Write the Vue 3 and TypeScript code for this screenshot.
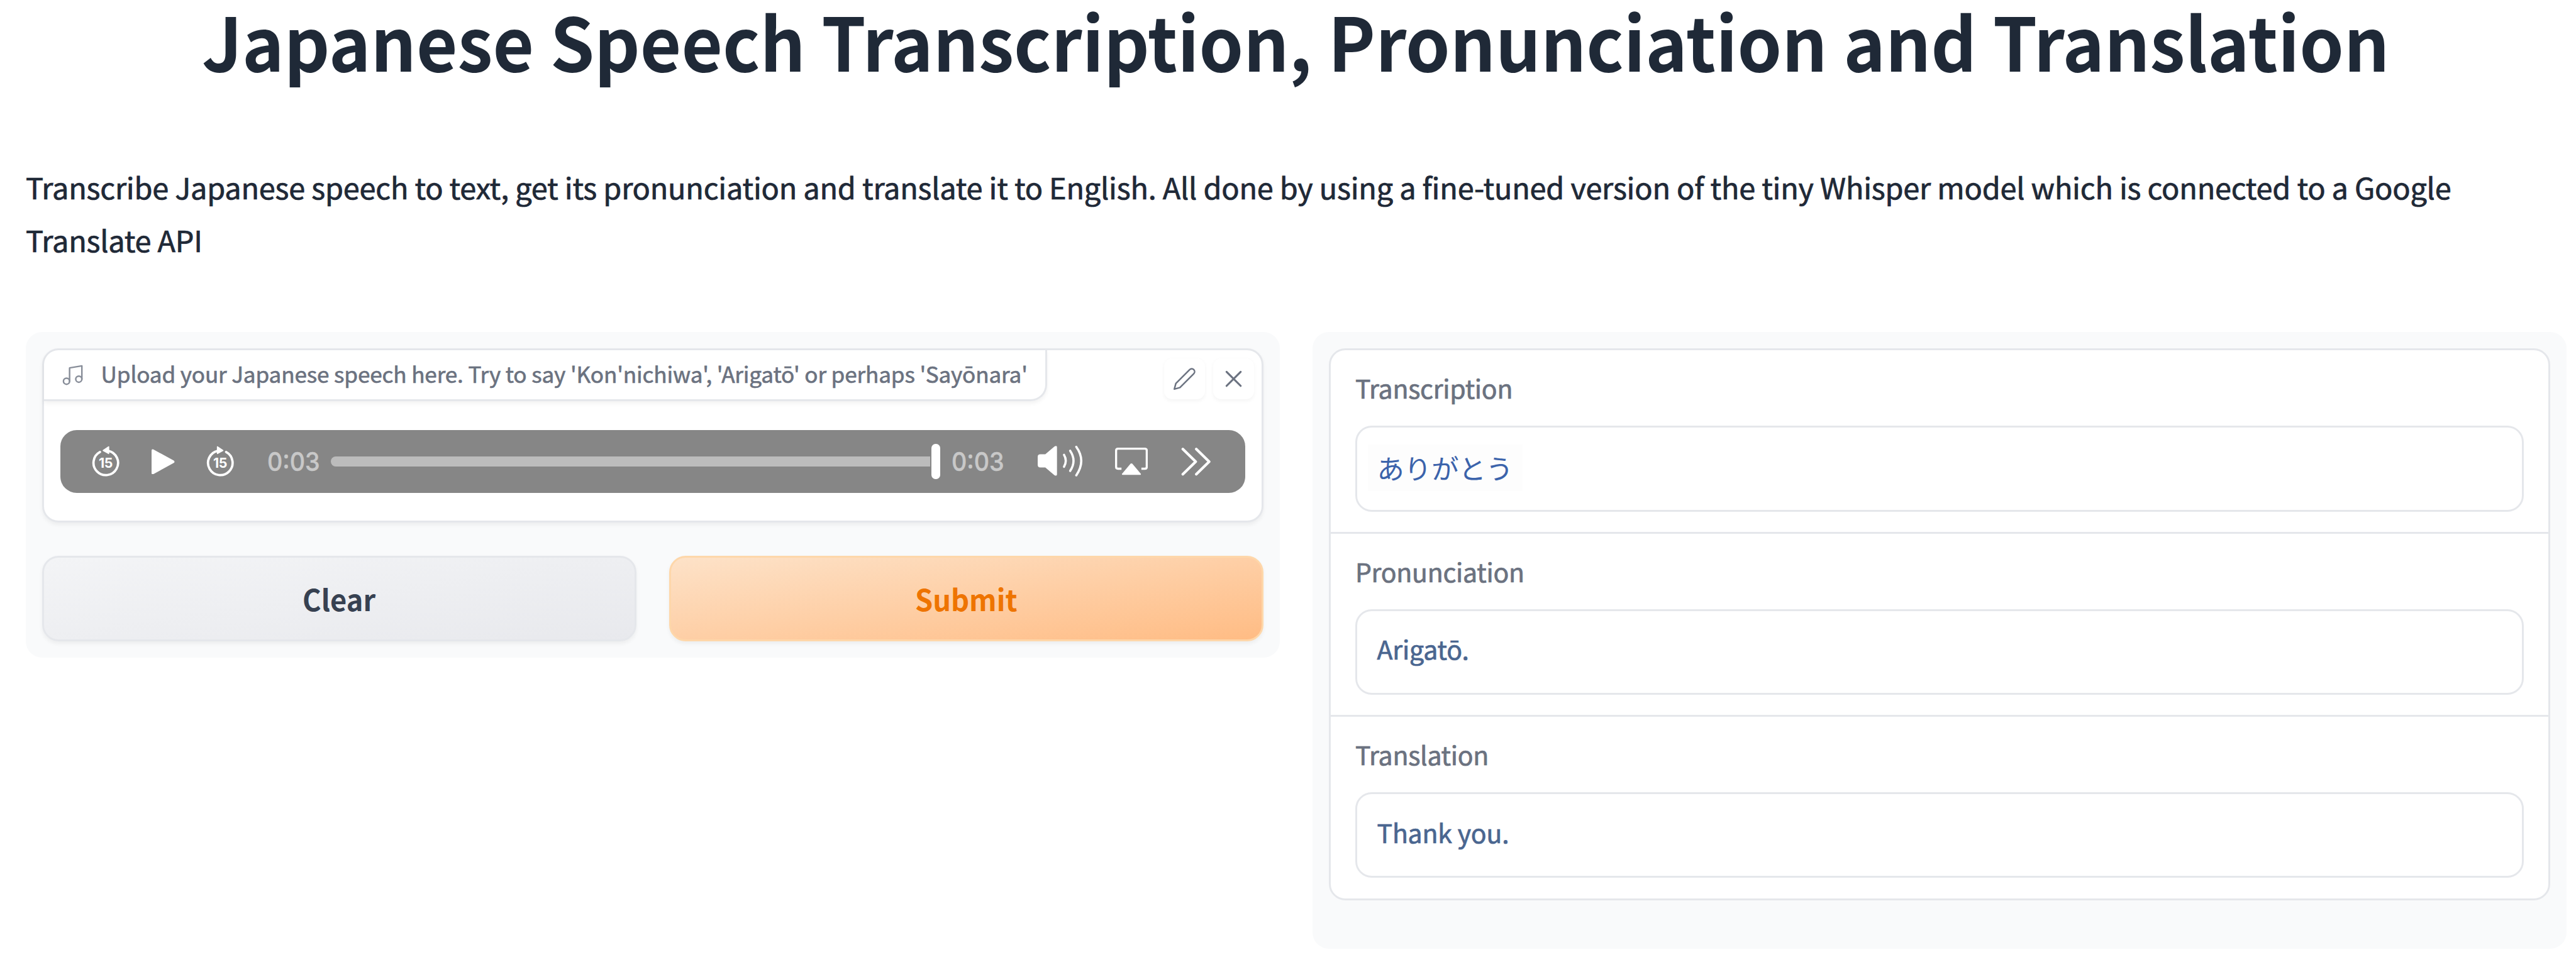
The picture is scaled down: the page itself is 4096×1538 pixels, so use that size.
<script setup lang="ts">
interface Field {
  label: string
  value: string
  translated: boolean
}

const title = 'Japanese Speech Transcription, Pronunciation and Translation'
const description =
  'Transcribe Japanese speech to text, get its pronunciation and translate it to English. All done by using a fine-tuned version of the tiny Whisper model which is connected to a Google Translate API'
const audioLabel =
  "Upload your Japanese speech here. Try to say 'Kon'nichiwa', 'Arigatō' or perhaps 'Sayōnara'"

const fields: Field[] = [
  { label: 'Transcription', value: 'ありがとう', translated: true },
  { label: 'Pronunciation', value: 'Arigatō.', translated: false },
  { label: 'Translation', value: 'Thank you.', translated: false },
]
</script>

<template>
  <main class="page">
    <h1 class="title"><span>{{ title }}</span></h1>
    <p class="description">{{ description }}</p>

    <div class="columns">
      <section class="panel">
        <div class="audio">
          <div class="audio-head">
            <div class="audio-label">
              <svg class="music" viewBox="0 0 24 24" fill="none" stroke="currentColor" stroke-width="1.5" stroke-linecap="round" stroke-linejoin="round">
                <path d="M9 18V5l12-2v13" />
                <circle cx="6" cy="18" r="3" />
                <circle cx="18" cy="16" r="3" />
              </svg>
              <span>{{ audioLabel }}</span>
            </div>
            <div class="tools">
              <button class="tool" aria-label="Edit">
                <svg viewBox="0 0 24 24" fill="none" stroke="currentColor" stroke-width="1.5" stroke-linecap="round" stroke-linejoin="round">
                  <path d="M17 3a2.828 2.828 0 1 1 4 4L7.5 20.5 2 22l1.5-5.5L17 3z" />
                </svg>
              </button>
              <button class="tool" aria-label="Clear">
                <svg viewBox="0 0 24 24" fill="none" stroke="currentColor" stroke-width="1.9" stroke-linecap="round">
                  <path d="M18.9 5.1L5.1 18.9M5.1 5.1l13.8 13.8" />
                </svg>
              </button>
            </div>
          </div>

          <div class="player">
            <svg class="skip" viewBox="0 0 50 54">
              <path d="M15 10.7A21 21 0 1 0 29.5 8.7" fill="none" stroke="#fff" stroke-width="4" stroke-linecap="round" />
              <path d="M20 7.3 29.2 1q1.6-.8 1.6.8v11.5q0 1.4-1.5.6L20 8.9q-1-.8 0-1.6z" fill="#fff" />
              <text x="24.6" y="38" text-anchor="middle">15</text>
            </svg>
            <svg class="play" viewBox="0 0 40 44">
              <path d="M3 .8 38 20q2.5 2 0 4L3 43.2q-3 .8-3-2.2V3q0-3 3-2.2z" fill="#fff" />
            </svg>
            <svg class="skip" viewBox="0 0 50 54">
              <path d="M35 10.7A21 21 0 1 1 20.5 8.7" fill="none" stroke="#fff" stroke-width="4" stroke-linecap="round" />
              <path d="M30 7.3 20.8 1q-1.6-.8-1.6.8v11.5q0 1.4 1.5.6L30 8.9q1-.8 0-1.6z" fill="#fff" />
              <text x="24.6" y="38" text-anchor="middle">15</text>
            </svg>
            <span class="time elapsed">0:03</span>
            <div class="track"></div>
            <div class="knob"></div>
            <span class="time total">0:03</span>
            <svg class="volume" viewBox="0 0 78 54">
              <path d="M4.5 14.5H13L28.5 1.3Q33-1.2 33 2.5V49q0 3.7-4.5 1.2L13 37H4.5Q0 37 0 32.5V19Q0 14.5 4.5 14.5z" fill="#fff" />
              <g fill="none" stroke="#fff" stroke-width="3.8" stroke-linecap="round">
                <path d="M45 15.5Q51 25.5 45 36" />
                <path d="M55.5 8.5Q67 25.5 55.5 43" />
                <path d="M66 1.8Q83 25.5 66 50.5" />
              </g>
            </svg>
            <svg class="airplay" viewBox="0 0 56 48">
              <path d="M11 36H5q-3.2 0-3.2-3.2V5Q1.8 1.8 5 1.8H51q3.2 0 3.2 3.2V32.800Q54.2 36 51 36H45" fill="none" stroke="#fff" stroke-width="3.6" />
              <path d="M26.5 27.5q1.5-1.5 3 0L44 44.5q.8 2-1 2H13q-1.8 0-1-2z" fill="#fff" />
            </svg>
            <svg class="more" viewBox="0 0 52 50">
              <path d="M3 3.5 25 25 3 46.5M26 3.5 48 25 26 46.5" fill="none" stroke="#fff" stroke-width="4.5" stroke-linecap="round" stroke-linejoin="round" />
            </svg>
          </div>
        </div>

        <div class="actions">
          <button class="btn secondary"><span>Clear</span></button>
          <button class="btn primary"><span>Submit</span></button>
        </div>
      </section>

      <section class="panel results">
        <div class="fields">
          <label v-for="f in fields" :key="f.label" class="field">
            <span class="field-label">{{ f.label }}</span>
            <span class="field-box">
              <span :class="f.translated ? 'kana' : 'latin'">{{ f.value }}</span>
            </span>
          </label>
        </div>
      </section>
    </div>
  </main>
</template>

<style>
html {
  font-size: 9.3006px;
}
body {
  margin: 0;
  background: #fff;
}
</style>

<style scoped>
* {
  box-sizing: border-box;
}
.page {
  width: 440.4rem;
  height: 165.3rem;
  padding: 0 1.65rem 0 4.4rem;
  overflow: hidden;
  color: #1f2937;
  background: #fff;
  font-family: 'Noto Sans CJK JP', 'Noto Sans', sans-serif;
}
.title {
  margin: 0;
  height: 27.46rem;
  padding-right: 0.2rem;
  font-size: 12.6rem;
  line-height: 13.6rem;
  font-weight: 700;
  text-align: center;
  white-space: nowrap;
}
.title span {
  display: inline-block;
  transform: scaleX(0.9635);
}
.description {
  margin: 0;
  height: 29.34rem;
  font-size: 5.04rem;
  line-height: 9.03rem;
  letter-spacing: -0.0245rem;
  -webkit-text-stroke: 0.08rem currentColor;
}
.columns {
  display: flex;
  align-items: flex-start;
  gap: 5.6rem;
}
.panel {
  flex: 1 1 0;
  min-width: 0;
  padding: 2.8rem;
  border-radius: 2.8rem;
  background: #f9fafb;
}
.audio {
  height: 29.7rem;
  border: 0.35rem solid #e5e7eb;
  border-radius: 2.8rem;
  background: #fff;
  box-shadow: 0 0.35rem 0.7rem rgba(0, 0, 0, 0.05);
}
.audio-head {
  display: flex;
  justify-content: space-between;
  height: 13.6rem;
}
.audio-label {
  display: flex;
  align-items: center;
  height: 8.7rem;
  padding: 0 3rem 0 2.75rem;
  border-right: 0.35rem solid #e5e7eb;
  border-bottom: 0.35rem solid #e5e7eb;
  border-radius: 2.5rem 0 2.8rem 0;
  box-shadow: 0 0.35rem 0.7rem rgba(0, 0, 0, 0.05);
  color: #6b7280;
  font-size: 3.78rem;
  line-height: 5rem;
  letter-spacing: -0.0175rem;
  white-space: nowrap;
  -webkit-text-stroke: 0.07rem currentColor;
}
.audio-label span {
  padding-bottom: 0.45rem;
}
.music {
  width: 4.2rem;
  height: 4.2rem;
  margin-right: 2.8rem;
  opacity: 0.8;
}
.tools {
  display: flex;
  gap: 1.4rem;
  padding: 1.35rem 1.25rem 0 0;
}
.tool {
  display: flex;
  align-items: center;
  justify-content: center;
  width: 7rem;
  height: 7rem;
  padding: 0;
  border: 0;
  border-radius: 1.4rem;
  background: #fff;
  box-shadow: 0 0.3rem 0.7rem rgba(0, 0, 0, 0.045);
  color: #6b7280;
}
.tool svg {
  width: 4.2rem;
  height: 4.2rem;
}
.player {
  display: flex;
  align-items: center;
  width: 202.6rem;
  height: 10.8rem;
  margin-left: 2.8rem;
  border-radius: 2.8rem;
  background: #868686;
}
.skip {
  flex: none;
  width: 5rem;
  height: 5.4rem;
  margin-left: 5.3rem;
}
.skip text {
  font: 700 23px Inter, sans-serif;
  letter-spacing: -0.5px;
  fill: #fff;
}
.play {
  flex: none;
  width: 4rem;
  height: 4.4rem;
  margin-left: 5.3rem;
}
.play + .skip {
  margin-left: 5.2rem;
}
.time {
  flex: none;
  width: 9rem;
  color: #c8c8c8;
  font: 500 4.45rem/5rem Inter, sans-serif;
  white-space: nowrap;
  transform: scaleX(0.91);
  transform-origin: left center;
  -webkit-text-stroke: 0.05rem currentColor;
}
.elapsed {
  margin-left: 5.6rem;
}
.track {
  flex: 1;
  height: 1.8rem;
  margin-left: 1.8rem;
  border-radius: 0.9rem 0 0 0.9rem;
  background: #bcbcbc;
}
.knob {
  flex: none;
  width: 1.45rem;
  height: 6rem;
  margin: 0 2rem 0 0.3rem;
  border-radius: 0.7rem;
  background: #fff;
}
.volume {
  flex: none;
  width: 7.8rem;
  height: 5.4rem;
  margin-left: 5.7rem;
}
.airplay {
  flex: none;
  width: 5.6rem;
  height: 4.8rem;
  margin-left: 5.4rem;
}
.more {
  flex: none;
  width: 5.2rem;
  height: 5rem;
  margin: 0 5.8rem 0 5.7rem;
}
.actions {
  display: flex;
  gap: 5.6rem;
  margin-top: 5.7rem;
}
.btn {
  flex: 1 1 0;
  height: 14.7rem;
  padding: 0;
  border: 0.35rem solid #e5e7eb;
  border-radius: 2.8rem;
  box-shadow: 0 0.35rem 0.7rem rgba(0, 0, 0, 0.05);
  font-family: inherit;
  font-size: 5.04rem;
  line-height: 9rem;
  font-weight: 700;
}
.btn span {
  display: inline-block;
  transform: scaleX(0.965);
}
.secondary {
  background: linear-gradient(to bottom right, #f3f4f6, #e8e9ed);
  color: #374151;
}
.primary {
  border-color: #fed7aa;
  background: linear-gradient(to bottom right, #fde2c8, #ffbc84);
  color: #ee7400;
}
.results {
  height: 105.4rem;
}
.fields {
  height: 94.4rem;
  border: 0.35rem solid #e5e7eb;
  border-radius: 2.8rem;
  background: #fff;
}
.field {
  display: block;
  height: 31rem;
  padding: 2.8rem 4.2rem 0;
}
.field + .field {
  height: 31.3rem;
  border-top: 0.35rem solid #e5e7eb;
  padding-top: 2.8rem;
}
.field-label {
  display: block;
  height: 10.1rem;
  color: #6b7280;
  font-size: 4.41rem;
  line-height: 7.3rem;
  letter-spacing: -0.03rem;
  -webkit-text-stroke: 0.08rem currentColor;
}
.field-box {
  display: flex;
  align-items: center;
  height: 14.65rem;
  padding-left: 3.4rem;
  border: 0.35rem solid #e5e7eb;
  border-radius: 2.8rem;
}
.latin {
  padding-bottom: 1rem;
  color: #4a6690;
  font-size: 4.41rem;
  line-height: 7rem;
  letter-spacing: -0.02rem;
  -webkit-text-stroke: 0.08rem currentColor;
}
.kana {
  margin: 0 0 0.3rem -1.6rem;
  padding: 0 1.6rem;
  background: #fdfdfd;
  color: #3b63ab;
  font-size: 4.66rem;
  line-height: 7.9rem;
}
</style>
